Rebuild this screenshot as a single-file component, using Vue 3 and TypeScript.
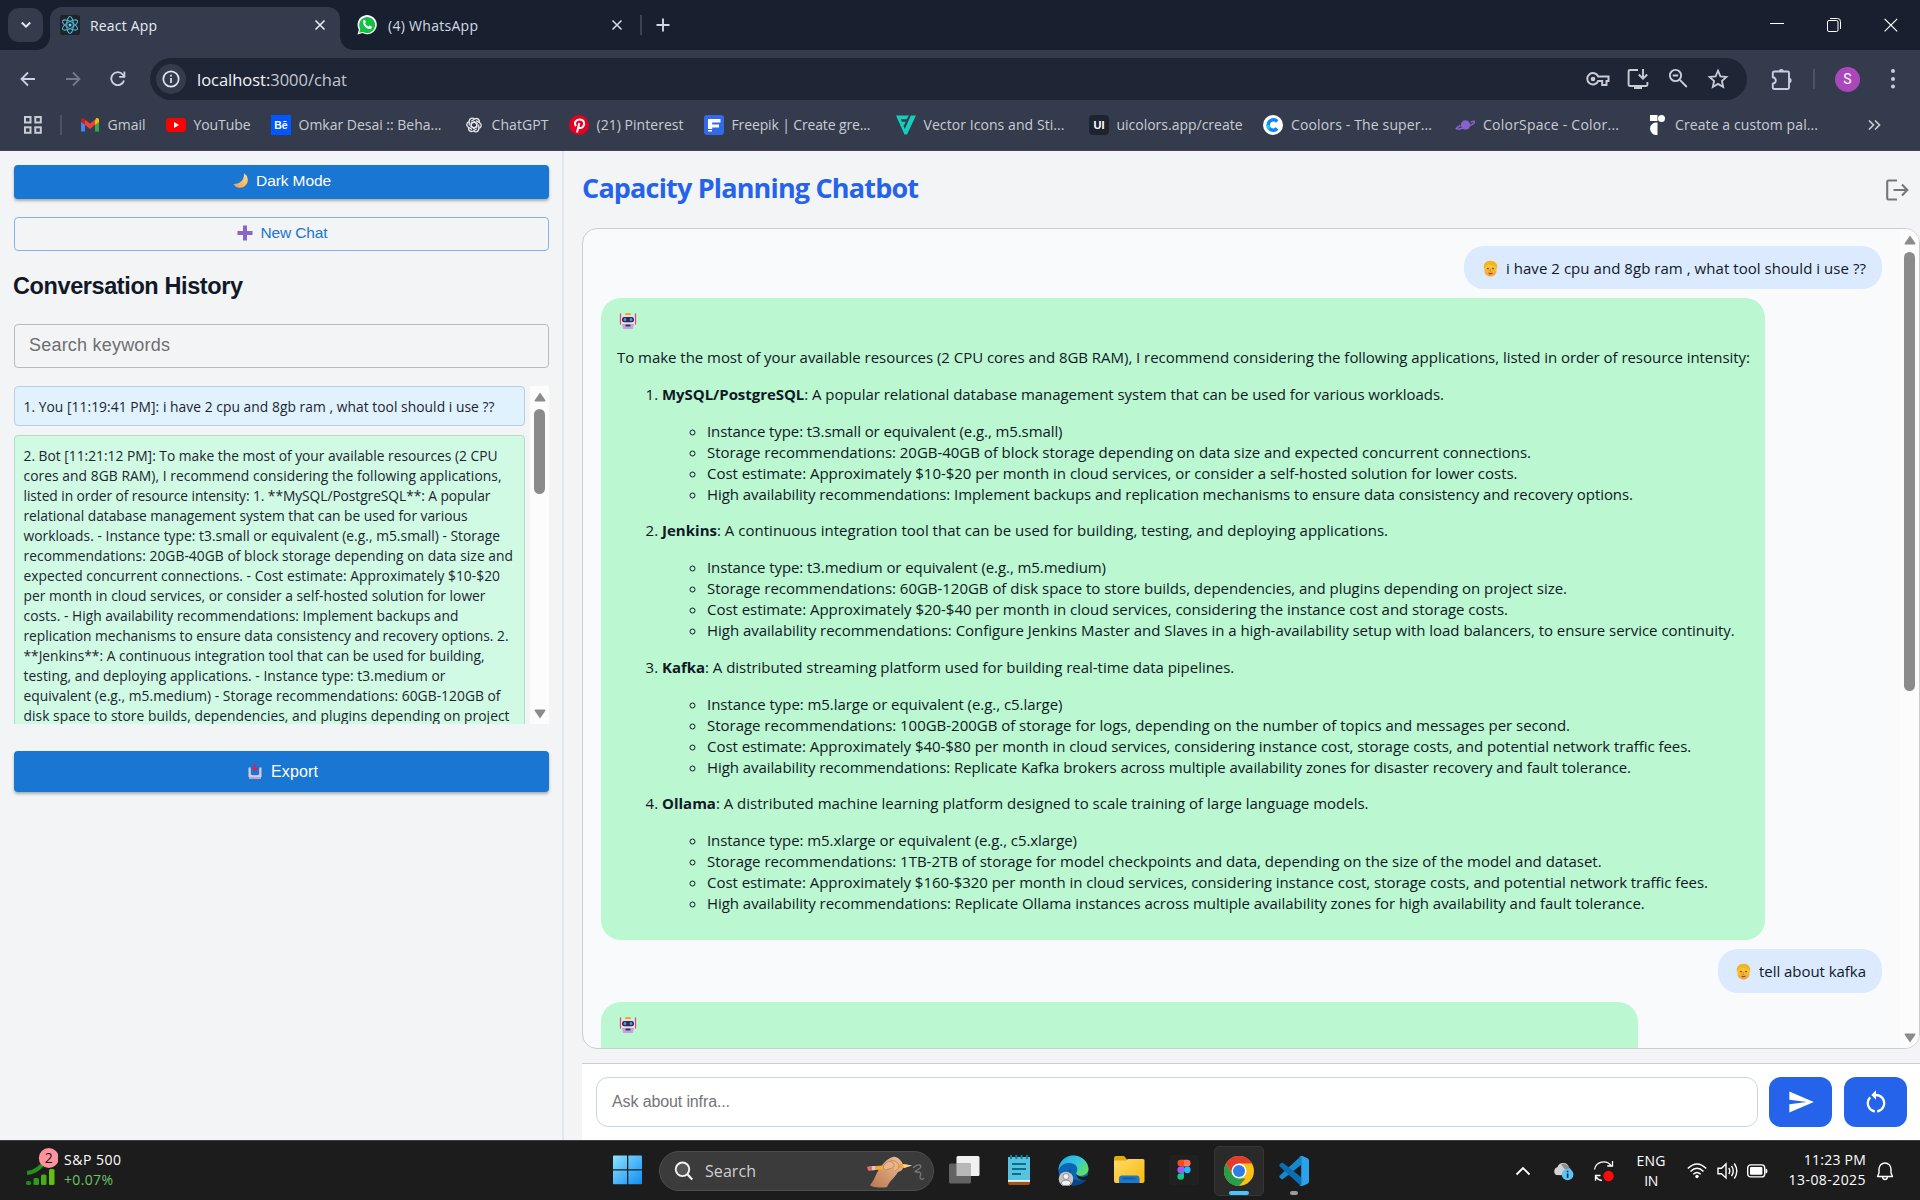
<script setup lang="ts">
interface Bookmark { id: string; label: string; slot: number; text: number }
interface Line { text: string; width: number }
interface Topic { name: string; rest: string; width: number; points: Line[] }

// Tracks a line of text so that it occupies the given width in pixels.
const vFit = {
  mounted(el: HTMLElement, binding: { value: number }) {
    const range = document.createRange()
    range.selectNodeContents(el)
    const natural = range.getBoundingClientRect().width
    const count = (el.textContent || '').length
    if (count > 1) el.style.letterSpacing = `${(binding.value - natural) / (count - 1)}px`
  },
}

const bookmarks: Bookmark[] = [
  { id: 'gmail', label: 'Gmail', slot: 86, text: 38 },
  { id: 'youtube', label: 'YouTube', slot: 105, text: 57 },
  { id: 'behance', label: 'Omkar Desai :: Beha...', slot: 193, text: 143 },
  { id: 'chatgpt', label: 'ChatGPT', slot: 105, text: 57 },
  { id: 'pinterest', label: '(21) Pinterest', slot: 135, text: 87 },
  { id: 'freepik', label: 'Freepik | Create gre...', slot: 192, text: 139 },
  { id: 'vector', label: 'Vector Icons and Sti...', slot: 193, text: 141 },
  { id: 'uicolors', label: 'uicolors.app/create', slot: 174.5, text: 126 },
  { id: 'coolors', label: 'Coolors - The super...', slot: 192, text: 141 },
  { id: 'colorspace', label: 'ColorSpace - Color...', slot: 192, text: 136 },
  { id: 'custom', label: 'Create a custom pal...', slot: 200, text: 143 },
]

const historyLines: Line[] = [
  { text: '2. Bot [11:21:12 PM]: To make the most of your available resources (2 CPU', width: 474 },
  { text: 'cores and 8GB RAM), I recommend considering the following applications,', width: 478 },
  { text: 'listed in order of resource intensity: 1. **MySQL/PostgreSQL**: A popular', width: 467 },
  { text: 'relational database management system that can be used for various', width: 444 },
  { text: 'workloads. - Instance type: t3.small or equivalent (e.g., m5.small) - Storage', width: 476.5 },
  { text: 'recommendations: 20GB-40GB of block storage depending on data size and', width: 489.5 },
  { text: 'expected concurrent connections. - Cost estimate: Approximately $10-$20', width: 476.5 },
  { text: 'per month in cloud services, or consider a self-hosted solution for lower', width: 462 },
  { text: 'costs. - High availability recommendations: Implement backups and', width: 435 },
  { text: 'replication mechanisms to ensure data consistency and recovery options. 2.', width: 485 },
  { text: '**Jenkins**: A continuous integration tool that can be used for building,', width: 461 },
  { text: 'testing, and deploying applications. - Instance type: t3.medium or', width: 422 },
  { text: 'equivalent (e.g., m5.medium) - Storage recommendations: 60GB-120GB of', width: 477 },
  { text: 'disk space to store builds, dependencies, and plugins depending on project', width: 486 },
]

const topics: Topic[] = [
  {
    name: 'MySQL/PostgreSQL', rest: ': A popular relational database management system that can be used for various workloads.', width: 782,
    points: [
      { text: 'Instance type: t3.small or equivalent (e.g., m5.small)', width: 355.5 },
      { text: 'Storage recommendations: 20GB-40GB of block storage depending on data size and expected concurrent connections.', width: 824 },
      { text: 'Cost estimate: Approximately $10-$20 per month in cloud services, or consider a self-hosted solution for lower costs.', width: 810.5 },
      { text: 'High availability recommendations: Implement backups and replication mechanisms to ensure data consistency and recovery options.', width: 926 },
    ],
  },
  {
    name: 'Jenkins', rest: ': A continuous integration tool that can be used for building, testing, and deploying applications.', width: 726,
    points: [
      { text: 'Instance type: t3.medium or equivalent (e.g., m5.medium)', width: 399 },
      { text: 'Storage recommendations: 60GB-120GB of disk space to store builds, dependencies, and plugins depending on project size.', width: 860 },
      { text: 'Cost estimate: Approximately $20-$40 per month in cloud services, considering the instance cost and storage costs.', width: 801 },
      { text: 'High availability recommendations: Configure Jenkins Master and Slaves in a high-availability setup with load balancers, to ensure service continuity.', width: 1027.7 },
    ],
  },
  {
    name: 'Kafka', rest: ': A distributed streaming platform used for building real-time data pipelines.', width: 572.3,
    points: [
      { text: 'Instance type: m5.large or equivalent (e.g., c5.large)', width: 355.5 },
      { text: 'Storage recommendations: 100GB-200GB of storage for logs, depending on the number of topics and messages per second.', width: 863 },
      { text: 'Cost estimate: Approximately $40-$80 per month in cloud services, considering instance cost, storage costs, and potential network traffic fees.', width: 984.2 },
      { text: 'High availability recommendations: Replicate Kafka brokers across multiple availability zones for disaster recovery and fault tolerance.', width: 924 },
    ],
  },
  {
    name: 'Ollama', rest: ': A distributed machine learning platform designed to scale training of large language models.', width: 706.5,
    points: [
      { text: 'Instance type: m5.xlarge or equivalent (e.g., c5.xlarge)', width: 370 },
      { text: 'Storage recommendations: 1TB-2TB of storage for model checkpoints and data, depending on the size of the model and dataset.', width: 894.6 },
      { text: 'Cost estimate: Approximately $160-$320 per month in cloud services, considering instance cost, storage costs, and potential network traffic fees.', width: 1001 },
      { text: 'High availability recommendations: Replicate Ollama instances across multiple availability zones for high availability and fault tolerance.', width: 937.7 },
    ],
  },
]
</script>

<template>
  <div class="screen">
    <svg class="defs" width="0" height="0">
      <defs>
        <linearGradient id="win" x1="0" y1="0" x2="1" y2="1"><stop offset="0" stop-color="#8fe3ff" /><stop offset="1" stop-color="#0f8df2" /></linearGradient>
        <linearGradient id="edgeA" x1="0" y1="0" x2="1" y2="0.6"><stop offset="0" stop-color="#1ea7e8" /><stop offset="0.6" stop-color="#33c8dd" /><stop offset="1" stop-color="#5fe063" /></linearGradient>
        <linearGradient id="face" x1="0" y1="0" x2="0" y2="1"><stop offset="0" stop-color="#ffd23f" /><stop offset="1" stop-color="#f0a52e" /></linearGradient>
        <linearGradient id="moon" x1="1" y1="0" x2="0" y2="1"><stop offset="0" stop-color="#ffe08a" /><stop offset="1" stop-color="#f29a4a" /></linearGradient>
        <linearGradient id="hand" x1="1" y1="0" x2="0" y2="1"><stop offset="0" stop-color="#efc29b" /><stop offset="1" stop-color="#b9764d" /></linearGradient>
        <linearGradient id="fold" x1="0" y1="0" x2="1" y2="1"><stop offset="0" stop-color="#ffdc6b" /><stop offset="1" stop-color="#fbb907" /></linearGradient>
        <symbol id="robot" viewBox="0 0 18 18">
          <path d="M1.500 2v10M16.500 2v10" stroke="#e8457a" stroke-width="1.300" stroke-linecap="round" />
          <rect x="6" y="1" width="6" height="2.400" rx="1.200" fill="#f7a823" />
          <rect x="2" y="3" width="14" height="10" rx="3" fill="#e6dcec" />
          <path d="M3 12h12l-1.200 5H4.200z" fill="#c3a4dc" />
          <rect x="3" y="5" width="12" height="5.200" rx="2.300" fill="#38294f" />
          <rect x="4.700" y="6" width="2.500" height="3" rx="1" fill="#35a0f2" /><rect x="10.800" y="6" width="2.500" height="3" rx="1" fill="#35a0f2" />
          <rect x="6.500" y="12.500" width="5" height="2" rx=".6" fill="#43334f" />
        </symbol>
        <symbol id="person" viewBox="0 0 16 18">
          <rect x="1.500" y="2" width="13" height="15.500" rx="6.200" fill="url(#face)" />
          <path d="M1 9.500C0 4 3 .8 8 .8s8 3.200 7 8.700L13.300 6.300Q9 6.500 6 4.500 4.500 6.500 2.700 7z" fill="#f3b41c" />
          <circle cx="5.300" cy="9" r=".9" fill="#5a3b2a" /><circle cx="10.700" cy="9" r=".9" fill="#5a3b2a" />
          <path d="M8 9.500l-.7 2.500h1.400" stroke="#d6802a" fill="none" stroke-width=".8" />
          <path d="M6.300 14q1.700 1 3.400 0" stroke="#b33d32" fill="none" stroke-width="1.200" stroke-linecap="round" />
        </symbol>
      </defs>
    </svg>

    <header class="browser">
      <div class="tabstrip">
        <div class="tabsearch"><svg width="12" height="10" viewBox="0 0 12 10"><path d="M1.800 2.500 6 6.700l4.200-4.200" fill="none" stroke="#e4e8f2" stroke-width="2" /></svg></div>
        <div class="tab active">
          <svg class="fav" width="20" height="20" viewBox="0 0 20 20"><rect width="20" height="20" rx="2" fill="#20232a" /><g fill="none" stroke="#4fb8d3" stroke-width="1.100"><ellipse cx="10" cy="10" rx="8.500" ry="3.300" transform="rotate(30 10 10)" /><ellipse cx="10" cy="10" rx="8.500" ry="3.300" transform="rotate(90 10 10)" /><ellipse cx="10" cy="10" rx="8.500" ry="3.300" transform="rotate(150 10 10)" /></g><circle cx="10" cy="10" r="1.500" fill="#61dafb" /></svg>
          <span class="tabtext"><span v-fit="67">React App</span></span>
          <svg width="12" height="12" viewBox="0 0 12 12"><path d="M1.500 1.500l9 9m0-9l-9 9" stroke="#e4e8f2" stroke-width="1.700" /></svg>
        </div>
        <div class="tab idle">
          <svg class="fav" width="20" height="20" viewBox="0 0 20 20"><path d="M.5 19.500l1.400-5A9.600 9.600 0 1 1 5.500 18z" fill="#fff" /><path d="M2.200 17.800l1-3.800a8 8 0 1 1 2.800 2.900z" fill="#12c143" /><path d="M6.500 5.300c.8-.8 1.500-.4 1.800.4l.5 1.200c.2.500-.5 1-.7 1.500.7 1.500 1.800 2.500 3.400 3.200.5-.2.900-1.200 1.400-1l1.700.9c.8.400-.1 2-1 2.400-3.600 1.200-9.100-4.300-7.100-8.600z" fill="#fff" /></svg>
          <span class="tabtext"><span v-fit="90">(4) WhatsApp</span></span>
          <svg width="12" height="12" viewBox="0 0 12 12"><path d="M1.500 1.500l9 9m0-9l-9 9" stroke="#cfd6e4" stroke-width="1.600" /></svg>
        </div>
        <i class="tabsep"></i>
        <svg class="plus" width="14" height="14" viewBox="0 0 14 14"><path d="M7 .5v13M.5 7h13" stroke="#cfd6e4" stroke-width="1.900" /></svg>
        <div class="winctl">
          <svg width="14" height="14" viewBox="0 0 14 14"><path d="M0 5.500h14" stroke="#fff" stroke-width="1" /></svg>
          <svg width="14" height="14" viewBox="0 0 14 14"><rect x=".5" y="2.500" width="10.500" height="11" rx="1.500" fill="none" stroke="#fff" stroke-width="1" /><path d="M3 .5h7.500q3 0 3 3V11" fill="none" stroke="#fff" stroke-width="1" /></svg>
          <svg width="14" height="14" viewBox="0 0 14 14"><path d="M.6.8l12.600 12.600M13.200.8.600 13.400" stroke="#fff" stroke-width="1.200" /></svg>
        </div>
      </div>

      <div class="toolbar">
        <svg class="nav" width="16" height="16" viewBox="0 0 16 16"><path d="M15 8H2M8 1.500 1.500 8 8 14.500" fill="none" stroke="#c9d2e6" stroke-width="1.800" /></svg>
        <svg class="nav" width="16" height="16" viewBox="0 0 16 16"><path d="M1 8h13M8 1.500 14.500 8 8 14.500" fill="none" stroke="#737b8b" stroke-width="1.800" /></svg>
        <svg class="nav" width="16" height="16" viewBox="0 0 16 16"><path d="M14 9.500A6.500 6.500 0 1 1 12.800 3.500L14.500 5.500" fill="none" stroke="#c9d2e6" stroke-width="1.900" /><path d="M15.300.5v6.200H9.200V4.900h4.300V.5z" fill="#c9d2e6" /></svg>
        <div class="omnibox">
          <div class="info"><svg width="18" height="18" viewBox="0 0 18 18"><circle cx="9" cy="9" r="7.700" fill="none" stroke="#e1e5ef" stroke-width="1.700" /><path d="M9 8v5M9 4.800v1.800" stroke="#e1e5ef" stroke-width="1.700" /></svg></div>
          <div class="url"><span v-fit="150"><b>localhost:</b>3000/chat</span></div>
          <svg width="24" height="24" viewBox="0 0 24 24"><g fill="none" stroke="#c8ccd6" stroke-width="2"><path d="M12.200 9.500h10.300V14h-2v4h-4.300v-4h-4a5.700 5.700 0 1 1 0-4.500z" /></g><circle cx="7" cy="12" r="2.300" fill="#c8ccd6" /></svg>
          <svg width="24" height="24" viewBox="0 0 24 24"><path d="M12 3H4.200Q2.600 3 2.600 4.500v13q0 1.500 1.600 1.500h15.600q1.600 0 1.600-1.500V15M17 2v9.500m-4.200-4L17 11.700l4.200-4.200" fill="none" stroke="#c8ccd6" stroke-width="1.900" /><path d="M8 19h8v3H8z" fill="#c8ccd6" /></svg>
          <svg width="24" height="24" viewBox="0 0 24 24"><g fill="none" stroke="#c8ccd6" stroke-width="1.900"><circle cx="9.500" cy="8.500" r="5.600" /><path d="m13.800 12.800 7 7.200M6.800 8.500h5.400" /></g></svg>
          <svg width="24" height="24" viewBox="0 0 24 24"><path d="m12 3.700 2.400 5.600 6 .6-4.500 4.100 1.300 6-5.200-3.100L6.800 20l1.300-6-4.500-4.100 6-.6z" fill="none" stroke="#c8ccd6" stroke-width="1.800" /></svg>
        </div>
        <svg class="puzzle" width="24" height="24" viewBox="0 0 24 24"><path d="M4.500 4.500h13.300q1.200 0 1.200 1.200v15.100q0 1.200-1.200 1.200H4Q2.800 22 2.800 20.800V16.700q3-.7 3-3.200t-3-3.200V5.700q0-1.200 1.700-1.200z" fill="none" stroke="#c4cde3" stroke-width="1.900" /><path d="M8.700 4.500a2.600 2.600 0 0 1 5.200 0zM19 10.800a2.600 2.600 0 0 1 0 5.200z" fill="#c4cde3" /></svg>
        <i class="barsep"></i>
        <div class="avatar">S</div>
        <svg class="dots" width="6" height="22" viewBox="0 0 6 22"><g fill="#c4cde3"><circle cx="3" cy="3" r="2" /><circle cx="3" cy="11" r="2" /><circle cx="3" cy="18.500" r="2" /></g></svg>
      </div>

      <nav class="bookmarks">
        <svg class="apps" width="20" height="20" viewBox="0 0 20 20"><g fill="none" stroke="#c9ccd5" stroke-width="2"><rect x="2" y="2" width="5.500" height="5.500" /><rect x="12.300" y="2" width="5.500" height="5.500" /><rect x="2" y="12.300" width="5.500" height="5.500" /><rect x="12.300" y="12.300" width="5.500" height="5.500" /></g></svg>
        <i class="bmsep"></i>
        <div v-for="b in bookmarks" :key="b.id" class="bookmark" :style="{ width: b.slot + 'px' }">
          <svg width="20" height="20" viewBox="0 0 20 20">
            <g v-if="b.id === 'gmail'"><path d="M1 5v11.500h4V9z" fill="#4285f4" /><path d="M19 5v11.500h-4V9z" fill="#34a853" /><path d="M15 5.500V9.800L19 7V4.800c0-1.700-1.800-2.400-3-1.500z" fill="#fbbc04" /><path d="M5 5.500V9.800L1 7V4.800c0-1.700 1.800-2.400 3-1.500z" fill="#c5221f" /><path d="M5 4.700l5 3.900 5-3.900V10l-5 3.900L5 10z" fill="#ea4335" /></g>
            <g v-else-if="b.id === 'youtube'"><rect y="3" width="20" height="14" rx="3.500" fill="#f00" /><path d="M8 7v6l5-3z" fill="#fff" /></g>
            <g v-else-if="b.id === 'behance'"><rect width="20" height="20" fill="#0057ff" /><text x="10" y="13.800" class="glyph" font-size="10.500" text-anchor="middle">Bē</text></g>
            <g v-else-if="b.id === 'chatgpt'" fill="none" stroke="#e6e8ee" stroke-width="1.300"><path v-for="n in 6" :key="n" :transform="`rotate(${n * 60} 10 10)`" d="M10 7 12.700 8.500V12.500M7.200 6.200l3.500-2.200c2.600-1.400 5.300.5 4.700 3.600" /></g>
            <g v-else-if="b.id === 'pinterest'"><circle cx="10" cy="10" r="10" fill="#e60023" /><path d="M8 17.500 10.300 8M7 11c-2.500-3 0-6.500 3.500-6.500 4.500 0 5.500 3.500 4 6.500-1.300 2.700-4.200 2.500-4.900 1" fill="none" stroke="#fff" stroke-width="2" /></g>
            <g v-else-if="b.id === 'freepik'"><rect width="20" height="20" rx="3" fill="#336aea" /><path d="M4 4h12.500v3.500H8.200v2h6.800v3H8.200v1.500H4zM4 15h4v1.500H4z" fill="#fff" /></g>
            <g v-else-if="b.id === 'vector'" fill="#17cdbc"><path d="M0 .5h13l-2.300 3.700H4.800l1.200 2.600h3.600L8 10.500H7.300L8.800 14 14.800.5H20L11 19.500H8.500z" /></g>
            <g v-else-if="b.id === 'uicolors'"><rect width="20" height="20" rx="4" fill="#1d2430" /><text x="10" y="13.800" class="glyph" font-size="11" text-anchor="middle">UI</text></g>
            <g v-else-if="b.id === 'coolors'"><circle cx="10" cy="10" r="10" fill="#fff" /><path d="M14.200 6.500a5.200 5.200 0 1 0 0 7" fill="none" stroke="#0b86fb" stroke-width="3.400" /><path d="M4.800 10a5.200 5.200 0 0 0 1.500 3.700" fill="none" stroke="#25c7f7" stroke-width="3.400" /></g>
            <g v-else-if="b.id === 'colorspace'"><circle cx="10.500" cy="10" r="4.700" fill="#8961cf" /><path d="M5.500 10.500C-1 14 0 15 7.500 13.200S21 7.500 19.500 6.500q-1-.6-4 .6" fill="none" stroke="#8961cf" stroke-width="1.500" /></g>
            <g v-else fill="#fff"><path d="M3 0h7.500v6H3zM10.500 7.500V20A6.500 6.500 0 0 1 3 13.500 6.500 6.500 0 0 1 10.500 7.500z" /><circle cx="14.500" cy="3.500" r="3.500" /></g>
          </svg>
          <span v-fit="b.text">{{ b.label }}</span>
        </div>
        <svg class="more" width="13" height="12" viewBox="0 0 13 12"><path d="M1 1.500 5.500 6 1 10.500M7 1.500 11.500 6 7 10.500" fill="none" stroke="#c9ccd5" stroke-width="1.700" /></svg>
      </nav>
    </header>

    <main class="page">
      <aside class="sidebar">
        <button class="mui filled"><svg width="16" height="16" viewBox="0 0 16 16"><path d="M11 .3A7.800 7.800 0 1 1 .3 11C6.800 11.500 11.500 7 11 .3z" fill="url(#moon)" /></svg><span v-fit="75">Dark Mode</span></button>
        <button class="mui outlined"><svg width="16" height="16" viewBox="0 0 16 16"><path d="M6 .5h4V6h5.500v4H10v5.500H6V10H.5V6H6z" fill="#8a64c8" /></svg><span v-fit="67">New Chat</span></button>
        <h2><span v-fit="230">Conversation History</span></h2>
        <div class="search"><span v-fit="141">Search keywords</span></div>
        <div class="history">
          <div class="entries">
            <div class="entry you"><span v-fit="471">1. You [11:19:41 PM]: i have 2 cpu and 8gb ram , what tool should i use ??</span></div>
            <div class="entry answer"><div v-for="l in historyLines" :key="l.text"><span v-fit="l.width">{{ l.text }}</span></div></div>
          </div>
          <div class="scroll">
            <svg width="12" height="10" viewBox="0 0 12 10"><path d="M6 .5 11.500 8.500q0 1-1 1h-9q-1 0-1-1z" fill="#8b8b8b" /></svg>
            <i class="thumb"></i>
            <svg class="down" width="12" height="10" viewBox="0 0 12 10"><path d="M6 9.500.5 1.500q0-1 1-1h9q1 0 1 1z" fill="#8b8b8b" /></svg>
          </div>
        </div>
        <button class="mui filled export"><svg width="14" height="16" viewBox="0 0 14 16"><path d="M1 5h12v10H1z" fill="#b9a4dc" /><path d="M2.500 3.500h9V11h-9z" fill="#1976d2" /><path d="M.5 3.500h2.200V10l1.500 1.500h5.600l1.500-1.500V3.500h2.200V13H.5z" fill="#d9cbe8" /><path d="M5.900 0h2.200v4h2.100L7 7.200 3.800 4h2.100z" fill="#d8234e" /></svg><span v-fit="47">Export</span></button>
      </aside>

      <section class="main">
        <div class="titlebar">
          <h1><span v-fit="337">Capacity Planning Chatbot</span></h1>
          <svg width="24" height="24" viewBox="0 0 24 24"><path d="M12 2.500H3.500q-1.300 0-1.300 1.300v16.400q0 1.300 1.300 1.300H12M8.500 12H22M17 6.500 22.300 12 17 17.500" fill="none" stroke="#767676" stroke-width="2.100" /></svg>
        </div>

        <div class="chat">
          <div class="messages">
            <div class="user"><svg width="17" height="17"><use href="#person" /></svg><span v-fit="360">i have 2 cpu and 8gb ram , what tool should i use ??</span></div>
            <article class="reply">
              <svg class="bot" width="18" height="18"><use href="#robot" /></svg>
              <p><span v-fit="1133">To make the most of your available resources (2 CPU cores and 8GB RAM), I recommend considering the following applications, listed in order of resource intensity:</span></p>
              <ol>
                <li v-for="t in topics" :key="t.name">
                  <span v-fit="t.width"><strong>{{ t.name }}</strong>{{ t.rest }}</span>
                  <ul><li v-for="p in t.points" :key="p.text"><span v-fit="p.width">{{ p.text }}</span></li></ul>
                </li>
              </ol>
            </article>
            <div class="user second"><svg width="17" height="17"><use href="#person" /></svg><span v-fit="107">tell about kafka</span></div>
            <article class="reply next"><svg class="bot" width="18" height="18"><use href="#robot" /></svg></article>
          </div>
          <div class="scroll wide">
            <svg width="12" height="10" viewBox="0 0 12 10"><path d="M6 .5 11.500 8.500q0 1-1 1h-9q-1 0-1-1z" fill="#8b8b8b" /></svg>
            <i class="thumb"></i>
            <svg class="down" width="12" height="10" viewBox="0 0 12 10"><path d="M6 9.500.5 1.500q0-1 1-1h9q1 0 1 1z" fill="#8b8b8b" /></svg>
          </div>
        </div>

        <form class="composer" @submit.prevent>
          <div class="ask"><span v-fit="118">Ask about infra...</span></div>
          <button class="act"><svg width="28" height="28" viewBox="0 0 24 24"><path d="M2 21 23 12 2 3v7l15 2-15 2z" fill="#fff" /></svg></button>
          <button class="act"><svg width="28" height="28" viewBox="0 0 24 24"><path d="M12 5V2L8 6l4 4V7c3.310 0 6 2.690 6 6 0 2.970-2.170 5.430-5 5.910v2.020c3.950-.49 7-3.850 7-7.930 0-4.420-3.580-8-8-8m-6 8c0-1.650.670-3.150 1.760-4.240L6.340 7.340C4.900 8.790 4 10.790 4 13c0 4.080 3.050 7.440 7 7.930v-2.020c-2.830-.480-5-2.940-5-5.910" fill="#fff" /></svg></button>
        </form>
      </section>
    </main>

    <footer class="taskbar">
      <div class="widget">
        <svg width="32" height="40" viewBox="0 0 32 40"><path d="M1 26q12-1 20-15" fill="none" stroke="#23921d" stroke-width="4" /><g fill="#55b512"><rect x="0" y="34" width="5" height="4" rx="1.500" fill="#188b20" /><rect x="7.500" y="31" width="5.500" height="7" rx="1.500" fill="#2c9c1b" /><rect x="15" y="27.500" width="5.500" height="10.500" rx="1.500" fill="#47ac15" /><rect x="23" y="22" width="5.500" height="16" rx="1.500" fill="#62bf0d" /></g><circle cx="22.800" cy="11" r="10" fill="#ff929f" /><text x="22.800" y="16.200" text-anchor="middle" font-size="14" fill="#151515" class="num">2</text></svg>
        <div class="quote"><div><span v-fit="57">S&amp;P 500</span></div><div class="gain"><span v-fit="49">+0.07%</span></div></div>
      </div>
      <svg class="start" width="30" height="30" viewBox="0 0 30 30"><path d="M0 1.500Q0 .5 1 .5h13v13.700H0zM15.300.5H28q1 0 1 1v12.700H15.300zM0 15.500h14v13.700H1q-1 0-1-1zM15.300 15.500H29v12.700q0 1-1 1H15.300z" fill="url(#win)" /></svg>
      <div class="pill">
        <svg width="20" height="20" viewBox="0 0 20 20"><circle cx="8.500" cy="8.300" r="6.800" fill="#555" stroke="#f2f2f2" stroke-width="1.900" /><path d="m13.400 13.300 4.800 5.200" stroke="#f2f2f2" stroke-width="2.200" /></svg>
        <span class="find"><span v-fit="51">Search</span></span>
        <svg class="pencil" width="58" height="32" viewBox="0 0 58 32"><path d="M3 29C7 25 8 20 11 15c3-5 9-13 15-14 4-1 9 4 10 8 1 3-1 6-5 7-4 7-8 8-11 15-3 1-14 1-17-2z" fill="url(#hand)" /><path d="M2 10.500 36 8l9 1.500-8 2.500L2 14.500z" fill="#f3a82f" /><path d="M36 8l9 1.500-8 2.500z" fill="#f1d3a8" /><path d="M0 10.700 5 10.300v4L1 14.500z" fill="#e56b78" /><path d="M5 10.300l3-.2v4l-3 .2z" fill="#c7d0d5" /><path d="M17 9q5-6 9-2t-4 6q-4 2-6-1zM23 4q8 1 9 5t-4 6" fill="#e9b58d" stroke="#b87851" stroke-width=".7" /><path d="M46 12c5-5 10-3 7 0-4 3-7 4-3 4 6 0 3 3 3 5 0 3 3 3 4 1" fill="none" stroke="#77797b" stroke-width="1.300" /></svg>
      </div>
      <svg class="t1" width="32" height="30" viewBox="0 0 32 30"><rect x="7.500" y="1" width="23" height="20" rx="1.500" fill="#f0f0f0" /><rect x="0" y="8.500" width="22" height="20" rx="1.500" fill="#696969" opacity=".92" /><rect x="7.500" y="8.500" width="14.500" height="12.500" fill="#b8b8b8" /></svg>
      <svg class="t2" width="24" height="32" viewBox="0 0 24 32"><path d="M1 27h22v2q0 2-2 2H3q-2 0-2-2z" fill="#a65318" /><path d="M1 3h22v24.500H1z" fill="#58c3df" /><path d="M1 26h22v1.800H1z" fill="#e9f8fb" /><path d="M4 1v4M9.300 1v4M14.600 1v4M19.900 1v4" stroke="#0f7f9e" stroke-width="2" /><path d="M5 10h14M5 15h14M5 20h9" stroke="#0b6f8b" stroke-width="2" /></svg>
      <svg class="t3" width="31" height="31" viewBox="0 0 31 31"><circle cx="15.500" cy="15.500" r="15" fill="#0b66b5" /><path d="M.5 15.500C.5 7 7 .5 15.500.5S30.500 7 30.500 14c0 6-9 9-12 5-1-1.500.8-1.500.8-5 0-4-4-6-8-6C6 8 2 10.500.5 15.500z" fill="url(#edgeA)" /><path d="M13 13c-3 8 3 16 16 11-3 4-8 6.500-13.500 6.500C10 28 8 20 13 13z" fill="#0c418c" /><path d="M18.500 19.500c3 3 8 3 11 1l1.500 1-1.700 3c-5 1.500-10.300 0-10.800-5z" fill="#1c1c1c" /><circle cx="8" cy="24" r="7.300" fill="#c5c5c5" /><circle cx="8" cy="21.500" r="3" fill="#f1f1f1" stroke="#8f8f8f" /><path d="M3 28q1-3 5-3t5 3l-2 2.500H5z" fill="#f1f1f1" stroke="#8f8f8f" /></svg>
      <svg class="t4" width="31" height="28" viewBox="0 0 31 28"><path d="M0 2Q0 0 2 0h8l3.500 4H29v5H0z" fill="#e5a80b" /><path d="M0 4.500h12L14 3h15q1.500 0 1.500 1.500V25q0 2-2 2H2q-2 0-2-2z" fill="url(#fold)" /><path d="M5 27v-4.500q0-3 3-3h14.500q3 0 3 3V27z" fill="#1879cf" /><path d="M9 22.500h12" stroke="#0d5ba4" stroke-width="1.500" stroke-linecap="round" /></svg>
      <svg class="t5" width="30" height="30" viewBox="0 0 30 30"><rect width="30" height="30" rx="3" fill="#202020" /><path d="M8.500 8q0-3.200 3.200-3.200H15v6.700h-3.300Q8.500 11.500 8.500 8z" fill="#f24e1e" /><path d="M15 4.800h3.200a3.350 3.350 0 0 1 0 6.700H15z" fill="#ff7262" /><path d="M15 11.500h-3.300a3.350 3.350 0 0 0 0 6.700H15z" fill="#a259ff" /><circle cx="18.300" cy="14.850" r="3.350" fill="#1abcfe" /><path d="M15 18.200v3.300a3.300 3.300 0 1 1-3.300-3.300z" fill="#0acf83" /></svg>
      <div class="live">
        <svg width="30" height="30" viewBox="0 0 30 30"><circle cx="15" cy="15" r="15" fill="#fbc116" /><path d="M2 7.500A15 15 0 0 1 28 7.500H15L8.500 18.800z" fill="#e33b2e" /><path d="M2 7.500 8.500 18.800 15 22.500h6.500L15 30A15 15 0 0 1 2 7.500z" fill="#2a9d48" /><circle cx="15" cy="15" r="7.500" fill="#fff" /><circle cx="15" cy="15" r="6" fill="#2f7ee8" /></svg>
        <i></i>
      </div>
      <div class="code">
        <svg width="30" height="30" viewBox="0 0 30 30"><path d="M22 0 4 16.500.8 19.500q-1.100 1.100 0 2.200L2.300 23q1 .8 2.200-.2L22 9z" fill="#1688cb" /><path d="M22 30 4 13.500.8 10.500q-1.100-1.100 0-2.200L2.300 7q1-.8 2.200.2L22 21z" fill="#0b6eb5" /><path d="M20 29q2 2 4 .8l4.500-2Q30 27 30 25.500v-21Q30 3 28.500 2.200L24 .2q-2-1.200-4 .8 2-1.300 2.200 1v26q-.2 2.300-2.200 1z" fill="#2aa2ee" /></svg>
        <i></i>
      </div>
      <div class="tray">
        <svg class="y1" width="16" height="10" viewBox="0 0 16 10"><path d="M1.500 8.500 8 2l6.500 6.500" fill="none" stroke="#fff" stroke-width="1.800" /></svg>
        <svg class="y2" width="21" height="20" viewBox="0 0 21 20"><path d="M3 14A4.500 4.500 0 0 1 4.500 6 6 6 0 0 1 16 6.500q3 2 2 6v2z" fill="#d2d2d2" /><path d="M8 3.500a6 6 0 0 1 8.500 4l-3 3z" fill="#8e8e8e" /><circle cx="14.600" cy="13.500" r="5.800" fill="#59c5f9" /><path d="M14.600 12.500v4.300M14.600 9.800v1.500" stroke="#123" stroke-width="1.600" /></svg>
        <svg class="y3" width="22" height="22" viewBox="0 0 22 22"><path d="M1.500 9.500A9.300 9.300 0 0 1 18 5.500M19.500 1v5h-5.300M9 20.500q-4-.5-6.500-4M7.500 15.500h-5v5.300" fill="none" stroke="#fff" stroke-width="1.300" /><circle cx="15.500" cy="16" r="5.200" fill="#fb0b0b" /></svg>
        <div class="lang"><div><span v-fit="29">ENG</span></div><div><span v-fit="14">IN</span></div></div>
        <svg class="y4" width="20" height="18" viewBox="0 0 20 18"><g fill="none" stroke="#fff" stroke-width="1.500"><path d="M.8 6.500q9.200-9 18.400 0M3.500 9.500q6.500-6.500 13 0M6.300 12.300q3.700-3.700 7.400 0" /></g><circle cx="10" cy="14.500" r="1.700" fill="#fff" /></svg>
        <svg class="y5" width="21" height="18" viewBox="0 0 21 18"><g fill="none" stroke="#fff" stroke-width="1.400"><path d="M1 6.300h3.500L9 2v14l-4.500-4.200H1z" /><path d="M11.800 6q2 3 0 6M14.500 3.800q3.500 5.200 0 10.400M17.300 1.500q5 7.500 0 15" /></g></svg>
        <svg class="y6" width="21" height="14" viewBox="0 0 21 14"><rect x=".7" y=".9" width="17" height="12" rx="3" fill="none" stroke="#fff" stroke-width="1.400" /><rect x="3" y="3.100" width="12.400" height="7.600" rx="1" fill="#fff" /><path d="M18.500 4.500q2 0 2 2.500t-2 2.500z" fill="#fff" /></svg>
        <div class="clock"><div><span v-fit="62">11:23 PM</span></div><div><span v-fit="77">13-08-2025</span></div></div>
        <svg class="y7" width="18" height="20" viewBox="0 0 18 20"><path d="M1.500 15.500 3 12V8a6 6 0 0 1 12 0v4l1.500 3.500zM6.500 16q.5 2.500 2.500 2.500t2.500-2.500" fill="none" stroke="#fff" stroke-width="1.400" stroke-linejoin="round" /></svg>
      </div>
    </footer>
  </div>
</template>

<style>
body { overflow: hidden; }
</style>

<style scoped>
* { box-sizing: border-box; }
.screen { width: 1920px; height: 1200px; display: flex; flex-direction: column; overflow: hidden; font-family: "Segoe UI", "Open Sans", sans-serif; color: #111827; background: #f3f4f6; }
.screen span { white-space: nowrap; }
.defs { position: absolute; }
svg { flex: none; display: block; }
button { font: inherit; border: 0; margin: 0; padding: 0; }

.browser { height: 151px; background: #333b4c; border-bottom: 1px solid #45414f; flex: none; }
.tabstrip { height: 50px; background: #18202f; display: flex; align-items: center; padding-left: 8px; position: relative; }
.tabsearch { width: 35px; height: 34px; border-radius: 11px; background: #333b4c; display: flex; align-items: center; justify-content: center; }
.tab { display: flex; align-items: center; font-size: 14px; color: #d3d9e6; }
.tab.active { position: relative; width: 290px; height: 43px; margin: 7px 0 0 7px; padding: 0 14px 7px 10px; background: #333b4c; border-radius: 12px 12px 0 0; color: #e8ebf3; }
.tab.active::before, .tab.active::after { content: ""; position: absolute; bottom: 0; width: 13px; height: 13px; }
.tab.active::before { left: -13px; background: radial-gradient(circle at 0 0, transparent 12.500px, #333b4c 13px); }
.tab.active::after { right: -13px; background: radial-gradient(circle at 100% 0, transparent 12.500px, #333b4c 13px); }
.tab.idle { width: 266px; margin-left: 17px; }
.tabtext { flex: 1; margin-left: 10px; }
.idle .tabtext { margin-left: 11px; }
.tabsep { width: 2px; height: 20px; background: #3a4355; margin-left: 17px; }
.plus { margin-left: 14px; }
.winctl { margin-left: auto; margin-right: 22px; display: flex; gap: 43px; }
.toolbar { height: 58px; display: flex; align-items: center; padding-left: 20px; }
.nav { margin-right: 29px; }
.omnibox { width: 1597px; height: 42px; margin-left: -5px; border-radius: 21px; background: #1e2636; display: flex; align-items: center; gap: 16px; padding: 0 17px 0 6px; }
.info { width: 30px; height: 30px; border-radius: 50%; background: #333b4c; display: flex; align-items: center; justify-content: center; }
.url { flex: 1; font-size: 16.500px; color: #c1c6d2; margin-left: -5px; }
.url b { color: #f1f3f8; font-weight: 400; }
.puzzle { margin-left: 23px; }
.barsep { width: 2px; height: 20px; margin-left: 19px; background: #4b5467; }
.avatar { width: 25px; height: 25px; border-radius: 50%; background: #ab47bc; margin-left: 20px; color: #fff; font: 14px/25px Roboto, sans-serif; text-align: center; }
.dots { margin-left: 30px; }
.bookmarks { height: 33px; display: flex; align-items: center; padding-left: 22.500px; }
.bookmark span { margin-top: -1px; }
.bmsep { width: 2px; height: 20px; background: #4b5467; margin: 0 18px 0 17px; }
.bookmark { display: flex; gap: 8px; align-items: center; font-size: 14px; color: #c9ccd5; flex: none; }
.glyph { font-family: "Liberation Sans", sans-serif; font-weight: 700; fill: #fff; }
.more { margin-left: 21px; }

.page { height: 989px; display: flex; }
.sidebar { width: 564px; flex: none; border-right: 2px solid #e2e8f0; padding: 14px 13px 0 14px; }
.mui { width: 535px; height: 34px; display: flex; align-items: center; justify-content: center; gap: 7px; border-radius: 4px; font-family: "Liberation Sans", Arial, sans-serif; font-size: 15.500px; padding: 0 0 2px 1px; }
.filled { background: #1976d2; color: #fff; box-shadow: 0 2px 3px rgba(0, 0, 0, .3); }
.outlined { margin-top: 18px; border: 1px solid #83b3e4; background: transparent; color: #1976d2; gap: 8px; padding-bottom: 3px; }
h2 { margin: 21px 0 0 -1px; font: bold 23.500px/28px "Liberation Sans", Arial, sans-serif; }
.search { width: 535px; height: 44px; margin-top: 24px; border: 1px solid #b9babc; border-radius: 4px; padding-left: 14px; font: 18px/40px "Liberation Sans", Arial, sans-serif; color: #6d6e70; }
.history { height: 338px; margin-top: 18px; display: flex; overflow: hidden; }
.entries { width: 511px; font-size: 13.800px; line-height: 20px; }
.entry { border: 1px solid #b9cfdc; border-radius: 4px; padding-left: 8.500px; color: #1c2430; }
.you { height: 40px; background: #e0f2fe; padding-top: 9.500px; }
.answer { height: 400px; margin-top: 9px; background: #d1fae5; border-color: #b0dcc6; padding-top: 10px; }
.scroll { width: 19px; margin-left: 5px; background: #fcfcfc; display: flex; flex-direction: column; align-items: center; padding: 6px 0 5px; flex: none; }
.thumb { width: 11px; height: 85px; margin-top: 7px; border-radius: 6px; background: #8b8b8b; }
.down { margin-top: auto; }
.export { height: 41px; margin-top: 27px; gap: 9px; font-size: 16px; padding: 0 0 0 3px; }

.main { width: 1338px; margin-left: 18px; display: flex; flex-direction: column; }
.titlebar { height: 77px; flex: none; display: flex; justify-content: space-between; align-items: center; padding: 0 11px 0 0; }
h1 { margin: 0 0 4px; font-size: 27px; font-weight: 700; color: #2563eb; line-height: 36px; }
.chat { height: 821px; flex: none; border: 1px solid #ccc; border-radius: 15px; background: #f9fafc; display: flex; overflow: hidden; }
.messages { flex: 1; padding: 17px 18px 0; display: flex; flex-direction: column; font-size: 15px; line-height: 21px; }
.user { align-self: flex-end; height: 43px; flex: none; display: flex; align-items: center; gap: 7px; padding: 1px 16px 0 18px; border-radius: 20px; background: #dbeafe; }
.reply { align-self: flex-start; width: 1164px; height: 642px; flex: none; margin-top: 9px; border-radius: 20px; background: #bbf7d0; padding: 14px 16px; }
.bot { margin-left: 1.500px; }
.reply p { margin: 16.500px 0 0; height: 21px; }
.reply ol { margin: 16px 0 0; padding-left: 45px; }
.reply ol > li { height: 136.600px; }
.reply ul { margin: 16px 0 0; padding-left: 45px; list-style: circle; }
.second { margin-top: 9px; height: 44px; padding-left: 17px; padding-top: 0; }
.next { width: 1037px; height: 120px; }
.wide { width: 19px; margin: 0; padding: 6px 0 5px; }
.wide .thumb { height: 439px; }
.composer { height: 77px; margin-top: 14px; flex: none; background: #fff; border-top: 1px solid #ccc; display: flex; padding: 13px 13px 13px 14px; }
.ask { width: 1162px; height: 50px; border: 1px solid #cbd5e1; border-radius: 12px; padding-left: 15px; font: 16px/48px "Liberation Sans", Arial, sans-serif; color: #757575; }
.act { width: 63px; height: 50px; margin-left: 11px; border-radius: 12px; background: #2563eb; display: flex; align-items: center; justify-content: center; }
.act + .act { margin-left: 12px; }

.taskbar { height: 60px; background: #1c1c1c; border-top: 1px solid #3b3f41; display: flex; align-items: center; color: #fff; font-size: 14px; line-height: 20px; }
.widget { display: flex; width: 613px; padding-left: 26px; gap: 6px; align-items: center; }
.widget svg { margin-top: -8px; }
.quote { margin-top: -2px; }
.gain { color: #6bc465; }
.num { font-family: "Open Sans", sans-serif; }
.pill { width: 275px; height: 40px; margin-left: 16px; border: 1px solid #4d4d4d; border-radius: 20px; background: #3b3b3b; display: flex; align-items: center; padding-left: 14px; }
.find { width: 162px; margin-left: 11px; font-size: 16px; color: #d0d0d0; }
.pencil { margin-top: 3px; }
.start, .t1, .t2, .t3, .t4, .t5 { margin-bottom: 1px; }
.t1 { margin-left: 15px; }
.t2 { margin-left: 26px; }
.t3 { margin-left: 27px; }
.t4 { margin-left: 25px; }
.t5 { margin-left: 24px; }
.live, .code { display: flex; flex-direction: column; align-items: center; height: 50px; padding-top: 9px; }
.live { width: 50px; margin-left: 15px; border: 1px solid #363636; border-radius: 5px; background: #2a2a2a; }
.live i { width: 20px; height: 4px; border-radius: 2px; background: #4cc2ff; margin-top: 5px; }
.code { margin-left: 15px; padding-top: 10px; }
.code i { width: 8px; height: 4px; border-radius: 2px; background: #9b9b9b; margin-top: 5px; }
.tray { margin-left: auto; display: flex; align-items: center; padding-right: 26px; }
.y2 { margin-left: 22px; }
.y3 { margin-left: 19px; }
.lang { width: 30px; margin-left: 21px; text-align: center; }
.y4 { margin-left: 21px; }
.y5 { margin-left: 10px; }
.y6 { margin-left: 9px; }
.clock { width: 78px; margin-left: 20px; text-align: right; margin-top: -2px; }
.y7 { margin-left: 10px; }
</style>
